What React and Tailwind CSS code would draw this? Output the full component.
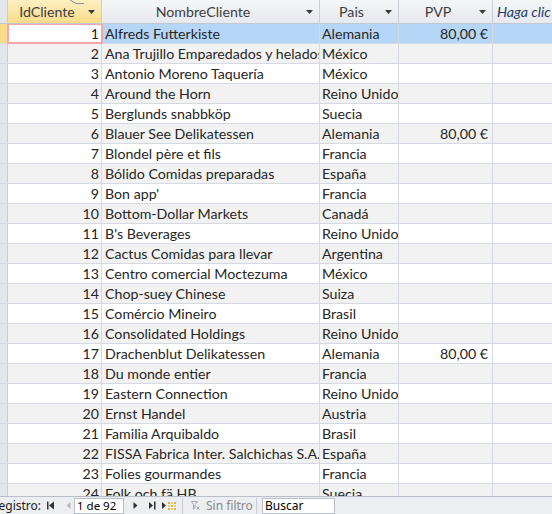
import React from 'react';

const rows = [
  [1, 'Alfreds Futterkiste', 'Alemania', '80,00 €'],
  [2, 'Ana Trujillo Emparedados y helados', 'México', ''],
  [3, 'Antonio Moreno Taquería', 'México', ''],
  [4, 'Around the Horn', 'Reino Unido', ''],
  [5, 'Berglunds snabbköp', 'Suecia', ''],
  [6, 'Blauer See Delikatessen', 'Alemania', '80,00 €'],
  [7, 'Blondel père et fils', 'Francia', ''],
  [8, 'Bólido Comidas preparadas', 'España', ''],
  [9, "Bon app'", 'Francia', ''],
  [10, 'Bottom-Dollar Markets', 'Canadá', ''],
  [11, "B's Beverages", 'Reino Unido', ''],
  [12, 'Cactus Comidas para llevar', 'Argentina', ''],
  [13, 'Centro comercial Moctezuma', 'México', ''],
  [14, 'Chop-suey Chinese', 'Suiza', ''],
  [15, 'Comércio Mineiro', 'Brasil', ''],
  [16, 'Consolidated Holdings', 'Reino Unido', ''],
  [17, 'Drachenblut Delikatessen', 'Alemania', '80,00 €'],
  [18, 'Du monde entier', 'Francia', ''],
  [19, 'Eastern Connection', 'Reino Unido', ''],
  [20, 'Ernst Handel', 'Austria', ''],
  [21, 'Familia Arquibaldo', 'Brasil', ''],
  [22, 'FISSA Fabrica Inter. Salchichas S.A.', 'España', ''],
  [23, 'Folies gourmandes', 'Francia', ''],
  [24, 'Folk och fä HB', 'Suecia', ''],
];

const Arrow = () => (
  <svg width="7" height="4" viewBox="0 0 7 4" className="shrink-0">
    <path d="M0 0h7L3.5 4z" fill="#3b3b3b" />
  </svg>
);

const HeaderCell = ({ w, label, arrow, active, italic }) => (
  <div
    className={`h-full ${w} shrink-0 flex items-center border-r border-[#c9cdd6] ${
      active ? 'bg-gradient-to-b from-[#fdefc1] to-[#f9dc8a]' : 'bg-gradient-to-b from-[#f5f6f8] to-[#e6e9ee]'
    }`}
  >
    <span
      className={`flex-1 truncate ${italic ? 'text-left pl-[4px] italic text-[#1f3a6b]' : 'text-center text-[#3d3d3d]'}`}
    >
      {label}
    </span>
    {arrow && (
      <span className="pr-[6px] pl-[2px] flex items-center">
        <Arrow />
      </span>
    )}
  </div>
);

export default function App() {
  return (
    <div
      className="relative w-[552px] h-[514px] overflow-hidden bg-white flex flex-col text-[14.2px] text-[#262626]"
      style={{ fontFamily: 'Lato, "Open Sans", sans-serif' }}
    >
      {/* header */}
      <div className="flex h-[24px] shrink-0 border-b border-[#c2c7d0]">
        <div className="w-[8px] shrink-0 h-full bg-[#e3e6eb] border-r border-[#c9cdd6]" />
        <HeaderCell w="w-[94px]" label="IdCliente" arrow active />
        <HeaderCell w="w-[218px]" label="NombreCliente" arrow />
        <HeaderCell w="w-[79px]" label="Pais" arrow />
        <HeaderCell w="w-[94px]" label="PVP" arrow />
        <HeaderCell w="w-[100px]" label="Haga clic para agregar" italic />
      </div>

      {/* rows */}
      <div className="flex-1 overflow-hidden">
        {rows.map(([id, name, pais, pvp]) => {
          const sel = id === 1;
          const bg = sel ? 'bg-[#b6d6f7]' : id % 2 === 0 ? 'bg-[#f2f2f2]' : 'bg-white';
          return (
            <div key={id} className={`flex h-[20px] border-b border-[#d5d9e2] ${bg}`}>
              <div
                className={`w-[8px] shrink-0 border-r border-[#c9cdd6] ${sel ? 'bg-[#f9dc8a]' : 'bg-[#e3e6eb]'}`}
              />
              <div
                className={`w-[94px] shrink-0 text-right pr-[2px] leading-[19px] border-r border-[#d5d9e2] ${
                  sel ? 'bg-white outline outline-2 -outline-offset-1 outline-[#f2a6aa]' : ''
                }`}
              >
                {id}
              </div>
              <div className="w-[218px] shrink-0 pl-[3px] leading-[19px] whitespace-nowrap overflow-hidden border-r border-[#d5d9e2]">
                {name}
              </div>
              <div className="w-[79px] shrink-0 pl-[2px] leading-[19px] whitespace-nowrap overflow-hidden border-r border-[#d5d9e2]">
                {pais}
              </div>
              <div className="w-[94px] shrink-0 text-right pr-[4px] leading-[19px] border-r border-[#d5d9e2]">
                {pvp}
              </div>
              <div className="w-[100px] shrink-0" />
            </div>
          );
        })}
      </div>

      {/* record navigation bar */}
      <div
        className="h-[18px] shrink-0 border-t border-[#b9bec8] bg-[#eceef1] flex items-center text-[12px] text-[#222] whitespace-nowrap"
        style={{ fontFamily: '"Noto Sans", "Open Sans", sans-serif' }}
      >
        <div className="w-[41px] shrink-0 overflow-hidden flex justify-end">
          <span>Registro:</span>
        </div>
        <svg className="ml-[6px] shrink-0" width="8" height="9" viewBox="0 0 8 9">
          <path d="M0 0.5h1.5v8H0zM7 0.5v8L2 4.5z" fill="#333" />
        </svg>
        <svg className="ml-[11px] shrink-0" width="5" height="9" viewBox="0 0 5 9">
          <path d="M4.5 1v7L0.5 4.5z" fill="#b8b8b8" />
        </svg>
        <div className="ml-[3px] h-[16px] w-[50px] shrink-0 overflow-hidden bg-white border border-[#b9bec8] flex items-center pl-[2px] leading-none text-black text-[11.5px]">
          1 de 92
        </div>
        <svg className="ml-[9px] shrink-0" width="5" height="9" viewBox="0 0 5 9">
          <path d="M0.5 1v7l4-3.5z" fill="#333" />
        </svg>
        <svg className="ml-[11px] shrink-0" width="7" height="9" viewBox="0 0 7 9">
          <path d="M0 1v7l4-3.5zM5 0.5h1.5v8H5z" fill="#333" />
        </svg>
        <svg className="ml-[6px] shrink-0" width="15" height="9" viewBox="0 0 15 9">
          <path d="M0 1v7l4-3.5z" fill="#333" />
          <rect x="6" y="1" width="2" height="2" fill="#e6b93c" />
          <rect x="9" y="1" width="2" height="2" fill="#f0d36e" />
          <rect x="12" y="1" width="2" height="2" fill="#e6b93c" />
          <rect x="6" y="4" width="2" height="2" fill="#f0d36e" />
          <rect x="9" y="4" width="2" height="2" fill="#e6b93c" />
          <rect x="12" y="4" width="2" height="2" fill="#f0d36e" />
          <rect x="6" y="7" width="2" height="2" fill="#e6b93c" />
          <rect x="9" y="7" width="2" height="2" fill="#f0d36e" />
          <rect x="12" y="7" width="2" height="2" fill="#e6b93c" />
        </svg>
        <span className="ml-[5px] h-[16px] w-px shrink-0 bg-[#c9cdd6]" />
        <svg className="ml-[8px] shrink-0" width="9" height="9" viewBox="0 0 9 9">
          <path d="M0.5 0.5h6L4 3.5V7L2.5 8V3.5z" fill="none" stroke="#a9a9a9" strokeWidth="1" />
          <path d="M5.5 5.5l3 3M8.5 5.5l-3 3" stroke="#a9a9a9" strokeWidth="1" />
        </svg>
        <span className="ml-[6px] w-[50px] shrink-0 text-[#8a8a8a]">Sin filtro</span>
        <span className="h-[16px] w-px shrink-0 bg-[#c9cdd6]" />
        <div className="ml-[5px] h-[16px] w-[73px] shrink-0 overflow-hidden bg-white border border-[#b9bec8] flex items-center pl-[2px] leading-none text-black">
          Buscar
        </div>
      </div>

      {/* callout remnant at the top edge */}
      <svg className="absolute left-[68px] top-0" width="16" height="5" viewBox="0 0 16 5">
        <path d="M2 0l6 3.5h8" fill="none" stroke="#8a8f99" strokeWidth="1" />
      </svg>
    </div>
  );
}
